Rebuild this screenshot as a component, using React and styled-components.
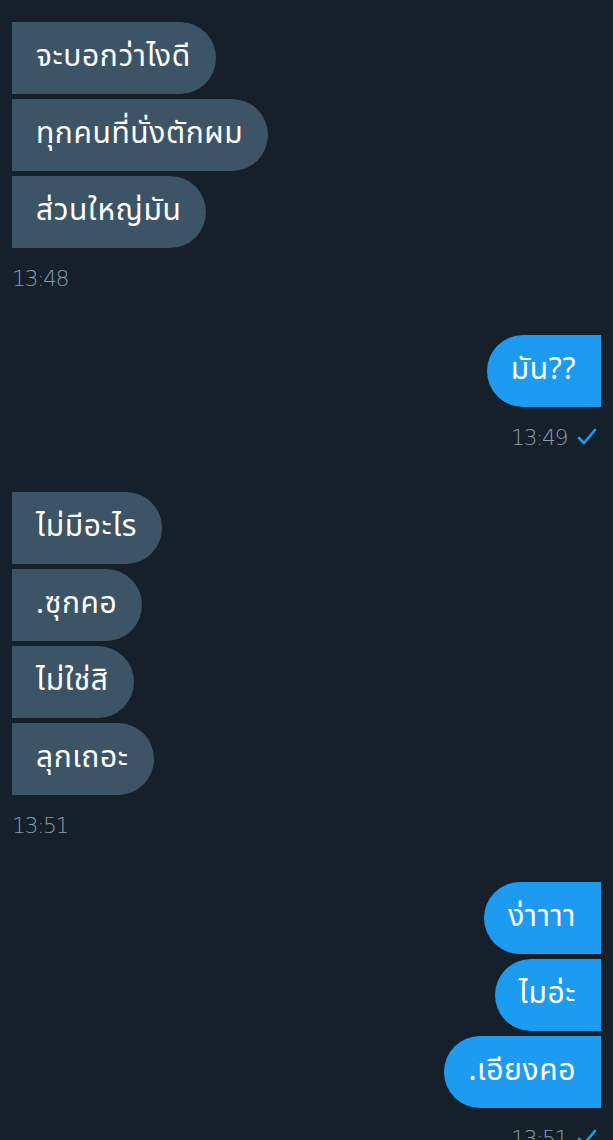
import styled, { createGlobalStyle } from "styled-components"

const Global = createGlobalStyle`
  html, body {
    margin: 0;
    padding: 0;
    background: #15202b;
  }
  body {
    font-family: "Noto Sans Thai", "Noto Sans", "Liberation Sans", sans-serif;
  }
`

const Page = styled.div`
  width: 613px;
  height: 1140px;
  overflow: hidden;
  box-sizing: border-box;
  padding: 22px 12px 0 12px;
  display: flex;
  flex-direction: column;
`

const Group = styled.div`
  display: flex;
  flex-direction: column;
  align-items: ${p => (p.$mine ? "flex-end" : "flex-start")};
  gap: 5px;
  margin-bottom: ${p => p.$gap || 0}px;
`

const Bubble = styled.div`
  box-sizing: border-box;
  height: 72px;
  display: flex;
  align-items: center;
  padding: 0 25px 2px 24px;
  font-size: 30px;
  letter-spacing: 0.6px;
  color: #ffffff;
  white-space: nowrap;
  background: ${p => (p.$mine ? "#1d9bf0" : "#3d5466")};
  border-radius: ${p => (p.$mine ? "36px 0 0 36px" : "0 36px 36px 0")};
`

const Stamp = styled.div`
  display: flex;
  align-items: center;
  gap: 10px;
  margin-top: 11px;
  height: 28px;
  font-family: "DejaVu Sans", sans-serif;
  font-weight: 300;
  font-size: 22px;
  letter-spacing: -1.5px;
  color: #8899a6;
  padding-right: ${p => (p.$mine ? "4px" : "0")};
`

const Tick = () => (
  <svg width="20" height="18" viewBox="0 0 20 18">
    <path d="M2 10 L7 15 L18 2" fill="none" stroke="#1d9bf0" strokeWidth="2.6" strokeLinecap="round" strokeLinejoin="round" />
  </svg>
)

export default function App() {
  return (
    <Page>
      <Global />
      <Group $gap={43}>
        <Bubble>จะบอกว่าไงดี</Bubble>
        <Bubble>ทุกคนที่นั่งตักผม</Bubble>
        <Bubble>ส่วนใหญ่มัน</Bubble>
        <Stamp>13:48</Stamp>
      </Group>
      <Group $mine $gap={41}>
        <Bubble $mine>มัน??</Bubble>
        <Stamp $mine>13:49 <Tick /></Stamp>
      </Group>
      <Group $gap={43}>
        <Bubble>ไม่มีอะไร</Bubble>
        <Bubble>.ซุกคอ</Bubble>
        <Bubble>ไม่ใช่สิ</Bubble>
        <Bubble>ลุกเถอะ</Bubble>
        <Stamp>13:51</Stamp>
      </Group>
      <Group $mine>
        <Bubble $mine>ง่าาาา</Bubble>
        <Bubble $mine>ไมอ่ะ</Bubble>
        <Bubble $mine>.เอียงคอ</Bubble>
        <Stamp $mine>13:51 <Tick /></Stamp>
      </Group>
    </Page>
  )
}
